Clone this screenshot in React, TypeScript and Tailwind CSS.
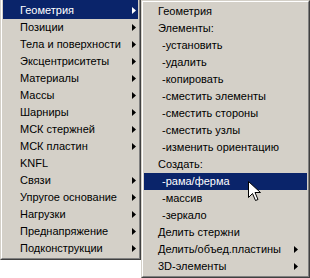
const leftItems: { label: string; sub: boolean }[] = [
  { label: 'Геометрия', sub: true },
  { label: 'Позиции', sub: true },
  { label: 'Тела и поверхности', sub: true },
  { label: 'Эксцентриситеты', sub: true },
  { label: 'Материалы', sub: true },
  { label: 'Массы', sub: true },
  { label: 'Шарниры', sub: true },
  { label: 'МСК стержней', sub: true },
  { label: 'МСК пластин', sub: true },
  { label: 'KNFL', sub: false },
  { label: 'Связи', sub: true },
  { label: 'Упругое основание', sub: true },
  { label: 'Нагрузки', sub: true },
  { label: 'Преднапряжение', sub: true },
  { label: 'Подконструкции', sub: true },
];

const subItems: { label: string; sub?: boolean; indent?: boolean }[] = [
  { label: 'Геометрия' },
  { label: 'Элементы:' },
  { label: '-установить', indent: true },
  { label: '-удалить', indent: true },
  { label: '-копировать', indent: true },
  { label: '-сместить элементы', indent: true },
  { label: '-сместить стороны', indent: true },
  { label: '-сместить узлы', indent: true },
  { label: '-изменить ориентацию', indent: true },
  { label: 'Создать:' },
  { label: '-рама/ферма', indent: true },
  { label: '-массив', indent: true },
  { label: '-зеркало', indent: true },
  { label: 'Делить стержни' },
  { label: 'Делить/объед.пластины', sub: true },
  { label: '3D-элементы', sub: true },
];

function Arrow({ white }: { white?: boolean }) {
  return (
    <svg width="4" height="7" viewBox="0 0 4 7" className="shrink-0">
      <polygon points="0,0 4,3.5 0,7" fill={white ? '#ffffff' : '#000000'} />
    </svg>
  );
}

export default function App() {
  return (
    <div
      className="relative flex items-start w-[310px] h-[278px] bg-white overflow-hidden text-[11px] text-black"
      style={{ fontFamily: '"Liberation Sans", Arial, sans-serif' }}
    >
      {/* main menu, top edge cut off */}
      <div className="w-[141px] bg-[#d4d0c8] border-l border-b border-r border-l-[#d4d0c8] border-b-[#404040] border-r-[#404040]">
        <div className="border-l border-b border-r border-l-white border-b-[#808080] border-r-[#808080] px-px pb-px">
          {leftItems.map((it, i) => {
            const active = i === 0;
            return (
              <div
                key={it.label}
                className={`flex items-center pl-[17px] pr-[2px] ${i === 0 ? 'h-[19px] pt-[2px]' : 'h-[17px]'} ${
                  active ? 'bg-[#0a246a] text-white' : ''
                }`}
              >
                <span className="flex-1 whitespace-nowrap">{it.label}</span>
                {it.sub && <Arrow white={active} />}
              </div>
            );
          })}
        </div>
      </div>

      {/* sub menu */}
      <div className="w-[169px] h-[278px] bg-[#d4d0c8] border border-t-[#d4d0c8] border-l-[#d4d0c8] border-b-[#404040] border-r-[#404040]">
        <div className="h-full border border-t-white border-l-white border-b-[#808080] border-r-[#808080] p-px">
          {subItems.map((it) => {
            const active = it.label === '-рама/ферма';
            return (
              <div
                key={it.label}
                className={`flex items-center h-[17px] pr-[9px] ${it.indent ? 'pl-[18px]' : 'pl-[14px]'} ${
                  active ? 'bg-[#0a246a] text-white' : ''
                }`}
              >
                <span className="flex-1 whitespace-nowrap">{it.label}</span>
                {it.sub && <Arrow />}
              </div>
            );
          })}
        </div>
      </div>

      {/* mouse cursor */}
      <svg
        width="13"
        height="21"
        viewBox="0 0 13 21"
        className="absolute left-[248px] top-[181px]"
      >
        <polygon
          points="0.5,0.5 0.5,16.5 4.5,12.5 7.5,19.5 10,18.5 7,11.5 12.5,11.5"
          fill="#ffffff"
          stroke="#000000"
          strokeWidth="1"
        />
      </svg>
    </div>
  );
}
